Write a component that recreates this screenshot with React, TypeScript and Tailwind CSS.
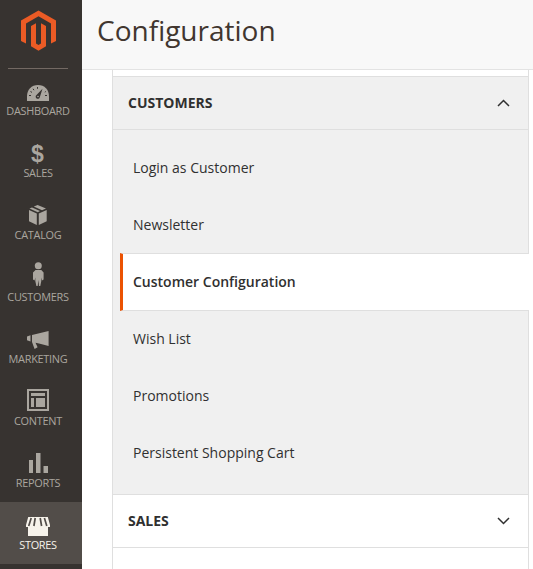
import type { ReactNode } from "react";

const icons: Record<string, ReactNode> = {
  dashboard: (
    <>
      <path d="M27 101V96.500C27 89.500 31.500 85 38 85S49 89.500 49 96.500V101Z" fill="currentColor" />
      <path d="M29 95.500H31M30.500 91.500L32 92.400M33 88.800L34 90.200M37.500 87V88.800M47 95.500H45M45.800 91.500L44.800 92.200" stroke="#373330" strokeWidth="1" />
      <path d="M42.500 88.800L39.800 97.200A2.100 2.100 0 1 1 36.500 95Z" fill="#373330" />
      <circle cx="38" cy="96.500" r=".8" fill="currentColor" />
    </>
  ),
  catalog: (
    <>
      <path d="M29 210L36.800 213.500V225L29 221.200ZM38.800 213.500L46.700 210V221.200L38.800 225Z" fill="currentColor" />
      <path d="M29.500 208.600L32 207.500L40 211.100L37.800 212.300ZM33.800 206.600L37.600 205L46 208.500L42 210.200Z" fill="currentColor" />
    </>
  ),
  customers: (
    <>
      <circle cx="38.300" cy="265.700" r="3.500" fill="currentColor" />
      <path d="M35.500 270H41.300L43.600 272.500V279.500L42 280.500L41.300 277.500V281L40.300 286H39L38.400 280L37.700 286H36.400L35.300 281V277.500L34.600 280.500L33 279.500V272.500Z" fill="currentColor" />
    </>
  ),
  marketing: (
    <path d="M27 336.500L30.500 335.300V341.500L27 340.200ZM32 335L48.600 331V346L39 343.500L35.500 342.800L37.600 347.200L34.600 349L32 342Z" fill="currentColor" />
  ),
  content: (
    <>
      <path d="M28 390H48V410H28Z" fill="none" stroke="currentColor" strokeWidth="2" />
      <path d="M31 393H45V396H31ZM31 398H34V407H31ZM36 398H45V407H36Z" fill="currentColor" />
    </>
  ),
  reports: <path d="M29 460H33V473H29ZM36 453H40.500V473H36ZM43.500 466H48V473H43.500Z" fill="currentColor" />,
  stores: (
    <>
      <path d="M28.200 517H47.800L50 525V527H48V536H28V527H26V525Z" fill="currentColor" />
      <path d="M31.200 518L28.700 526M35.200 518L33.900 526M40.200 518L41.600 526M44.400 518L46.800 526" stroke="#524d49" strokeWidth="1.700" />
    </>
  ),
};

const menu = [
  { id: "dashboard", label: "DASHBOARD", box: "0 68 82 62" },
  { id: "sales", label: "SALES", box: "0 130 82 62" },
  { id: "catalog", label: "CATALOG", box: "0 192 82 62" },
  { id: "customers", label: "CUSTOMERS", box: "0 254 82 62" },
  { id: "marketing", label: "MARKETING", box: "0 316 82 62" },
  { id: "content", label: "CONTENT", box: "0 378 82 62" },
  { id: "reports", label: "REPORTS", box: "0 440 82 62" },
  { id: "stores", label: "STORES", box: "0 502 82 62" },
];

const sections = ["Login as Customer", "Newsletter", "Customer Configuration", "Wish List", "Promotions", "Persistent Shopping Cart"];

function Sidebar() {
  return (
    <nav className="flex w-[82px] shrink-0 flex-col bg-[#373330] text-[#aaa69f]">
      <div className="h-[68px] shrink-0">
        <svg viewBox="0 0 82 68" className="h-[68px] w-[82px]" fill="#eb5b25">
          <path d="M38.500 10.500L56 20.600V41L51 43.500V23.400L38.500 16.300L26 23.400V43.500L21 41V20.600Z" />
          <path d="M31 26L36 23.200V43.500L38.500 45L41 43.500V23.200L46 26V46.200L38.500 50.700L31 46.200Z" />
        </svg>
      </div>
      <div className="-mb-px ml-2 h-px w-[60px] shrink-0 bg-[#736963]" />
      {menu.map((m) => (
        <a key={m.id} className={`grid h-[62px] shrink-0 ${m.id === "stores" ? "bg-[#524d49] text-[#f7f3eb]" : ""}`}>
          {m.id === "sales" ? (
            <span className="col-start-1 row-start-1 w-[75px] pt-[10px] text-center font-['Liberation_Sans'] text-[23px] leading-[28px] font-bold">$</span>
          ) : (
            <svg viewBox={m.box} className="col-start-1 row-start-1 h-[62px] w-[82px]">{icons[m.id]}</svg>
          )}
          <span className="col-start-1 row-start-1 flex w-[76px] scale-x-95 justify-center pt-[35px] text-[11.5px] leading-4 tracking-[-0.3px]">
            {m.label}
          </span>
        </a>
      ))}
    </nav>
  );
}

function Chevron({ open }: { open?: boolean }) {
  return (
    <svg viewBox="0 0 14 10" className="h-[10px] w-[14px]" fill="none" stroke="#303030" strokeWidth="1.500">
      <path d={open ? "M2 8L7.500 2.500L13 8" : "M2 2L7.500 7.500L13 2"} />
    </svg>
  );
}

export default function App() {
  return (
    <div className="flex h-[569px] w-[533px] overflow-hidden bg-white font-['Open_Sans',sans-serif] text-[#303030]">
      <Sidebar />
      <main className="flex flex-1 flex-col">
        <header className="h-[70px] shrink-0 border-b border-[#e3e3e3] bg-[#f8f8f8] pt-[11px] pl-[15px]">
          <h1 className="text-[28px] leading-[38px] text-[#41362f]">Configuration</h1>
        </header>
        <div className="ml-[30px] flex w-[417px] flex-1 flex-col border-x border-[#dfdfdf]">
          <div className="h-[6px] shrink-0" />
          <div className="flex h-[54px] shrink-0 items-center justify-between border-y border-[#dfdfdf] bg-[#f0f0f0] pr-[18px] pl-[15px] text-[14px] font-bold">
            <span className="pb-0.5">CUSTOMERS</span>
            <Chevron open />
          </div>
          <ul className="h-[364px] shrink-0 bg-[#f0f0f0] pt-[9px] text-[14px]">
            {sections.map((s) =>
              s === "Customer Configuration" ? (
                <li key={s} className="-mr-px ml-[7px] flex h-[58px] items-center border-y border-l-[3px] border-y-[#dfdfdf] border-l-[#eb5202] bg-white pb-0.5 pl-[10px] font-semibold">{s}</li>
              ) : (
                <li key={s} className="flex h-[57px] items-center pl-5 nth-[n+4]:-mt-px nth-[n+4]:mb-px">{s}</li>
              ),
            )}
          </ul>
          <div className="flex h-[54px] shrink-0 items-center justify-between border-y border-[#dfdfdf] pr-[18px] pl-[15px] text-[14px] font-bold">
            <span className="pb-0.5">SALES</span>
            <Chevron />
          </div>
        </div>
      </main>
    </div>
  );
}
